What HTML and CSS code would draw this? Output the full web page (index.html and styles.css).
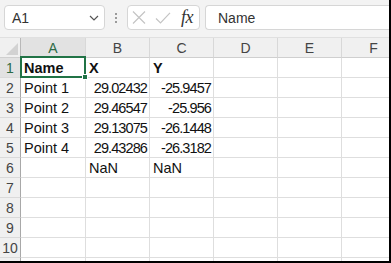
FILE: index.html
```html
<!DOCTYPE html>
<html>
<head>
<meta charset="utf-8">
<link rel="stylesheet" href="styles.css">
</head>
<body>
<div class="window">
  <div class="toolbar">
    <div class="namebox">
      <span class="name-ref">A1</span>
      <svg class="chev" width="10" height="6" viewBox="0 0 10 6"><path d="M1 1 L5 5 L9 1" fill="none" stroke="#555" stroke-width="1.2"/></svg>
    </div>
    <div class="dots"><span></span><span></span><span></span></div>
    <div class="fxbox">
      <svg width="14" height="13" viewBox="0 0 14 13"><path d="M1 0.5 L13 12.5 M13 0.5 L1 12.5" stroke="#c4c4c4" stroke-width="1.2" fill="none"/></svg>
      <svg width="16" height="12" viewBox="0 0 16 12"><path d="M1 6.5 L5.5 11 L15 0.8" stroke="#c4c4c4" stroke-width="1.2" fill="none"/></svg>
      <span class="fx">fx</span>
    </div>
    <div class="formula">Name</div>
  </div>
  <div class="grid">
    <div class="corner"><span class="tri"></span></div>
    <div class="ch sel">A</div><div class="ch">B</div><div class="ch">C</div><div class="ch">D</div><div class="ch">E</div><div class="ch">F</div>

    <div class="rh sel">1</div>
    <div class="c b active">Name<span class="selbox"><span class="handle"></span></span></div><div class="c b">X</div><div class="c b">Y</div><div class="c"></div><div class="c"></div><div class="c"></div>

    <div class="rh">2</div>
    <div class="c">Point 1</div><div class="c n">29.02432</div><div class="c n">-25.9457</div><div class="c"></div><div class="c"></div><div class="c"></div>

    <div class="rh">3</div>
    <div class="c">Point 2</div><div class="c n">29.46547</div><div class="c n">-25.956</div><div class="c"></div><div class="c"></div><div class="c"></div>

    <div class="rh">4</div>
    <div class="c">Point 3</div><div class="c n">29.13075</div><div class="c n">-26.1448</div><div class="c"></div><div class="c"></div><div class="c"></div>

    <div class="rh">5</div>
    <div class="c">Point 4</div><div class="c n">29.43286</div><div class="c n">-26.3182</div><div class="c"></div><div class="c"></div><div class="c"></div>

    <div class="rh">6</div>
    <div class="c"></div><div class="c">NaN</div><div class="c">NaN</div><div class="c"></div><div class="c"></div><div class="c"></div>

    <div class="rh">7</div>
    <div class="c"></div><div class="c"></div><div class="c"></div><div class="c"></div><div class="c"></div><div class="c"></div>

    <div class="rh">8</div>
    <div class="c"></div><div class="c"></div><div class="c"></div><div class="c"></div><div class="c"></div><div class="c"></div>

    <div class="rh">9</div>
    <div class="c"></div><div class="c"></div><div class="c"></div><div class="c"></div><div class="c"></div><div class="c"></div>

    <div class="rh">10</div>
    <div class="c"></div><div class="c"></div><div class="c"></div><div class="c"></div><div class="c"></div><div class="c"></div>

    <div class="rh"></div>
    <div class="c"></div><div class="c"></div><div class="c"></div><div class="c"></div><div class="c"></div><div class="c"></div>
  </div>
</div>
</body>
</html>
```

FILE: styles.css
```css
* { box-sizing: border-box; }
html, body { margin: 0; padding: 0; background: #fff; }
body { font-family: "Liberation Sans", Arial, sans-serif; }

.window {
  width: 391px;
  height: 263px;
  overflow: hidden;
  border-right: 2px solid #000;
  border-bottom: 2px solid #000;
  background: #fff;
}

.toolbar {
  height: 38px;
  background: #f3f3f3;
  display: flex;
  align-items: flex-start;
  padding-top: 5px;
  padding-left: 4px;
  border-bottom: 1px solid #e0e0e0;
  white-space: nowrap;
}

.namebox {
  width: 101px;
  height: 25px;
  background: #fff;
  border: 1px solid #d6d6d6;
  border-radius: 4px;
  display: flex;
  align-items: center;
  justify-content: space-between;
  padding: 0 5px 0 7px;
  font-size: 14px;
  color: #333;
}
.name-ref { padding-top: 1px; }

.dots {
  width: 22px;
  height: 25px;
  display: flex;
  flex-direction: column;
  align-items: center;
  justify-content: center;
  gap: 2px;
}
.dots span {
  width: 2px;
  height: 2px;
  background: #9a9a9a;
}

.fxbox {
  width: 73px;
  height: 25px;
  background: #fff;
  border: 1px solid #d6d6d6;
  border-radius: 4px;
  display: flex;
  align-items: center;
  padding-left: 4px;
  gap: 9px;
}
.fx {
  font-family: "Liberation Serif", "Times New Roman", serif;
  font-style: italic;
  font-size: 18px;
  color: #333;
  margin-left: 1px;
  letter-spacing: -0.5px;
}

.formula {
  margin-left: 5px;
  flex: 1;
  height: 25px;
  background: #fff;
  border: 1px solid #d6d6d6;
  border-right: none;
  border-radius: 4px 0 0 4px;
  font-size: 14px;
  color: #333;
  display: flex;
  align-items: center;
  padding-left: 12px;
}

.grid {
  display: grid;
  grid-template-columns: 21px 65px 64px 64px 64px 64px 64px;
  grid-auto-rows: 20px;
  font-size: 14.5px;
  color: #111;
}

.corner {
  background: #f0f0f0;
  border-right: 1px solid #b8b8b8;
  border-bottom: 1px solid #cfcfcf;
  position: relative;
}
.tri {
  position: absolute;
  right: 2px;
  bottom: 2px;
  width: 0;
  height: 0;
  border-left: 12px solid transparent;
  border-bottom: 12px solid #d2d2d2;
}

.ch {
  background: #f0f0f0;
  border-right: 1px solid #d8d8d8;
  border-bottom: 1px solid #cfcfcf;
  font-size: 14px;
  color: #444;
  display: flex;
  align-items: center;
  justify-content: center;
}
.ch.sel {
  background: #e2e2e2;
  color: #2c6a45;
}

.rh {
  background: #f0f0f0;
  border-right: 1px solid #a8a8a8;
  border-bottom: 1px solid #dadada;
  font-size: 14px;
  color: #444;
  display: flex;
  align-items: center;
  justify-content: center;
}
.rh.sel {
  background: #e2e2e2;
  color: #2c6a45;
}

.c {
  border-right: 1px solid #dedede;
  border-bottom: 1px solid #dedede;
  display: flex;
  align-items: center;
  padding-left: 3px;
  white-space: nowrap;
  overflow: visible;
}
.c.b { font-weight: bold; }
.c.n {
  justify-content: flex-end;
  padding-right: 2px;
  letter-spacing: -0.9px;
}

.active { position: relative; }
.selbox {
  position: absolute;
  left: -1px;
  top: -2px;
  right: -1px;
  bottom: -1px;
  border: 2px solid #217346;
}
.handle {
  position: absolute;
  right: -4px;
  bottom: -4px;
  width: 6px;
  height: 6px;
  background: #217346;
  border: 1px solid #fff;
}
```
